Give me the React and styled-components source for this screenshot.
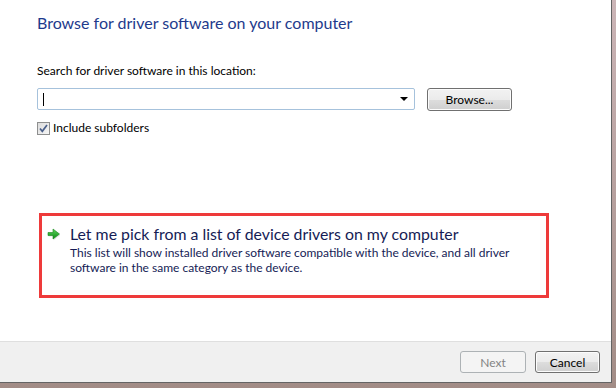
import React from "react";
import styled, { createGlobalStyle } from "styled-components";

const GlobalStyle = createGlobalStyle`
  html, body { margin: 0; padding: 0; }
  body { font-family: "Lato", "Open Sans", sans-serif; }
`;

const Frame = styled.div`
  width: 616px;
  height: 388px;
  box-sizing: border-box;
  padding: 0 4px 5px 0;
  display: flex;
  background: linear-gradient(#cbb5b7, #a28c86);
`;

const Window = styled.div`
  flex: 1;
  display: flex;
  flex-direction: column;
  background: #fff;
  border-right: 1px solid #646464;
  border-bottom: 1px solid #646464;
`;

const Body = styled.div`
  flex: 1;
  padding: 12px 0 0 37px;
  display: flex;
  flex-direction: column;
  align-items: flex-start;
`;

const Title = styled.h1`
  margin: 0;
  font-size: 16px;
  line-height: 22px;
  font-weight: 400;
  color: #1e3a8c;
`;

const Label = styled.div`
  margin-top: 29px;
  font-size: 12px;
  line-height: 16px;
  color: #000;
`;

const Row = styled.div`
  margin-top: 9px;
  display: flex;
  align-items: flex-start;
  gap: 12px;
`;

const Combo = styled.div`
  width: 378px;
  height: 22px;
  box-sizing: border-box;
  border: 1px solid #a6c2dc;
  border-radius: 2px;
  display: flex;
  align-items: center;
  justify-content: space-between;
  padding: 0 6px 0 5px;
`;

const Caret = styled.span`
  width: 1px;
  height: 13px;
  background: #000;
`;

const DropArrow = styled.span`
  width: 0;
  height: 0;
  border-left: 4px solid transparent;
  border-right: 4px solid transparent;
  border-top: 4px solid #000;
`;

const Button = styled.button`
  width: ${(p) => p.$w}px;
  height: ${(p) => p.$h}px;
  box-sizing: border-box;
  padding: 0;
  border-radius: 3px;
  border: 1px solid ${(p) => (p.disabled ? "#adb2b5" : "#707070")};
  background: ${(p) =>
    p.disabled
      ? "#f4f4f4"
      : "linear-gradient(#f2f2f2 0%, #ebebeb 50%, #dddddd 51%, #cfcfcf 100%)"};
  box-shadow: inset 0 0 0 1px ${(p) => (p.disabled ? "#f4f4f4" : "#fcfcfc")};
  font-family: "Lato", "Open Sans", sans-serif;
  font-size: 12px;
  color: ${(p) => (p.disabled ? "#838383" : "#000")};
`;

const CheckRow = styled.label`
  margin-top: 10px;
  display: flex;
  align-items: center;
  gap: 3px;
  font-size: 12px;
  line-height: 14px;
  color: #000;
`;

const CheckBox = styled.span`
  width: 13px;
  height: 13px;
  box-sizing: border-box;
  border: 1px solid #8e8f8f;
  background: linear-gradient(135deg, #dcdcdc, #f6f6f6);
  display: flex;
  align-items: center;
  justify-content: center;
`;

const CommandLink = styled.div`
  margin: 78px 0 0 2px;
  width: 510px;
  height: 85px;
  box-sizing: border-box;
  border: 3px solid #ee3a3a;
  display: flex;
  gap: 9px;
  padding: 8px 0 0 5px;
`;

const LinkText = styled.div`
  display: flex;
  flex-direction: column;
`;

const LinkTitle = styled.div`
  font-size: 15.85px;
  line-height: 20px;
  color: #151c55;
`;

const LinkDesc = styled.div`
  margin-top: 1px;
  font-size: 12px;
  line-height: 15px;
  color: #151c55;
  width: 450px;
`;

const Footer = styled.div`
  height: 41px;
  box-sizing: border-box;
  border-top: 1px solid #dfdfdf;
  background: #f0f0f0;
  display: flex;
  justify-content: flex-end;
  align-items: flex-start;
  gap: 9px;
  padding: 9px 11px 0 0;
`;

function GreenArrow() {
  return (
    <svg width="14" height="14" viewBox="0 0 14 14" style={{ marginTop: 3, flexShrink: 0 }}>
      <defs>
        <linearGradient id="ga" x1="0" y1="0" x2="0" y2="1">
          <stop offset="0" stopColor="#5fd35f" />
          <stop offset="1" stopColor="#0b8c14" />
        </linearGradient>
      </defs>
      <path d="M1 6.2h5V2.5L12.5 7.5 6 12.5V8.8H1z" fill="#d8d8d8" transform="translate(0.6 0.8)" opacity="0.7" />
      <path d="M1 5.5h5V2L12.5 7 6 12V8.5H1z" fill="url(#ga)" stroke="#17871c" strokeWidth="0.6" strokeLinejoin="round" />
    </svg>
  );
}

export default function App() {
  return (
    <>
      <GlobalStyle />
      <Frame>
        <Window>
          <Body>
            <Title>Browse for driver software on your computer</Title>
            <Label>Search for driver software in this location:</Label>
            <Row>
              <Combo>
                <Caret />
                <DropArrow />
              </Combo>
              <Button $w={85} $h={23}>Browse...</Button>
            </Row>
            <CheckRow>
              <CheckBox>
                <svg width="9" height="9" viewBox="0 0 9 9">
                  <path d="M1 4.5l2.3 2.8L8 1" fill="none" stroke="#4a5f8a" strokeWidth="1.7" />
                </svg>
              </CheckBox>
              Include subfolders
            </CheckRow>
            <CommandLink>
              <GreenArrow />
              <LinkText>
                <LinkTitle>Let me pick from a list of device drivers on my computer</LinkTitle>
                <LinkDesc>
                  This list will show installed driver software compatible with the device, and all driver
                  software in the same category as the device.
                </LinkDesc>
              </LinkText>
            </CommandLink>
          </Body>
          <Footer>
            <Button $w={66} $h={22} disabled>Next</Button>
            <Button $w={65} $h={22}>Cancel</Button>
          </Footer>
        </Window>
      </Frame>
    </>
  );
}
